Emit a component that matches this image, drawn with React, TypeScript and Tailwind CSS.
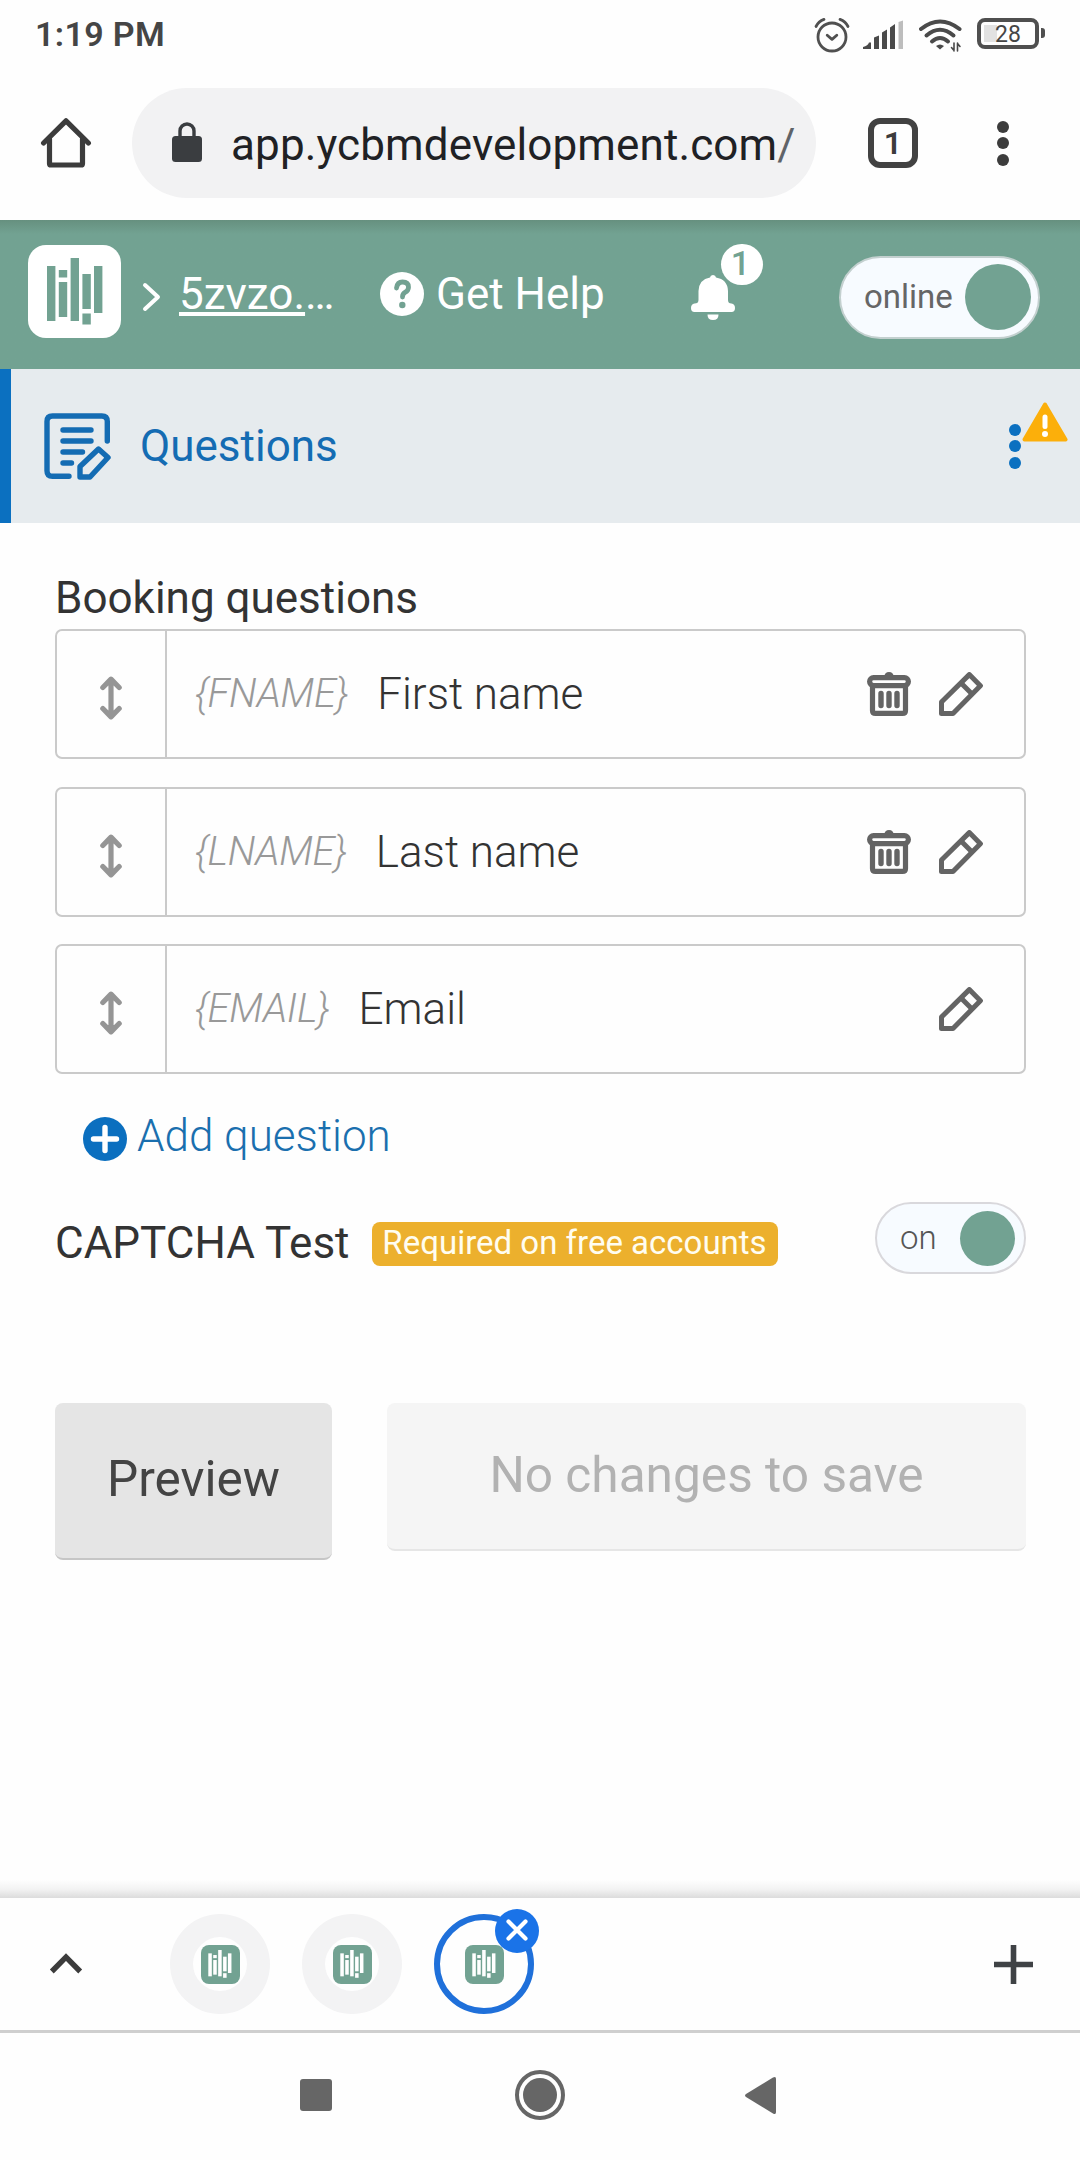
import { useState } from 'react';

type Question = {
  id: string;
  token: string;
  label: string;
  removable: boolean;
};

const QUESTIONS: Question[] = [
  { id: 'fname', token: '{FNAME}', label: 'First name', removable: true },
  { id: 'lname', token: '{LNAME}', label: 'Last name', removable: true },
  { id: 'email', token: '{EMAIL}', label: 'Email', removable: false },
];

function LogoBars({ className }: { className: string }) {
  return (
    <svg className={className} viewBox="0 0 56 67" fill="currentColor">
      <rect x="0" y="8" width="8.4" height="55" />
      <rect x="11.8" y="12" width="8.4" height="7.5" />
      <rect x="11.8" y="24" width="8.4" height="35" />
      <rect x="23.6" y="0" width="8.4" height="63" />
      <rect x="35.4" y="16" width="8.4" height="35" />
      <rect x="35.4" y="55.5" width="8.4" height="11" />
      <rect x="47" y="8" width="8.4" height="47" />
    </svg>
  );
}

function StatusBar() {
  return (
    <div className="flex h-[68px] shrink-0 items-center justify-between pl-[35px] pr-[35px] text-[#454545]">
      <span className="text-[34px] leading-none font-semibold tracking-[0.35px]">1:19 PM</span>
      <div className="flex items-start pt-[1px]">
        <svg className="h-[36px] w-[36px]" viewBox="0 0 36 36" fill="none" stroke="#505050" strokeLinecap="round" strokeLinejoin="round">
          <circle cx="18" cy="20" r="14" strokeWidth="2.8" />
          <path d="M13.2 18.2l4.8 4.2 4.8-4.2" strokeWidth="2.8" />
          <path d="M2 9.5Q4.5 4.5 10 2.4M34 9.5Q31.5 4.5 26 2.4" strokeWidth="2.8" />
        </svg>
        <svg className="mt-[3px] ml-[13px] h-[30px] w-[41px]" viewBox="0 0 41 30" fill="#4a4a4a">
          <path d="M0 29v-2q5-1.500 6-4.500h2V29zM11 29V17.500l5-2V29zM19 29V12.500l5-3V29zM27 29V7.500l5-3.500V29z" />
          <path d="M35.500 29V2L40 .5V29z" fill="#bdbdbd" />
        </svg>
        <svg className="mt-[2px] ml-[15px] h-[34px] w-[43px]" viewBox="0 0 43 34" fill="none" stroke="#4a4a4a" strokeLinecap="round">
          <path d="M2 10Q21 -5 40.500 10" strokeWidth="4" />
          <path d="M7.500 16.500Q21 5 34.500 16.500" strokeWidth="4" />
          <path d="M13 22.500Q21 15.500 29 22.500" strokeWidth="4" />
          <path d="M17 27Q21 24 25 27L21 30.500z" fill="#4a4a4a" stroke="none" />
          <path d="M35 24v8M35 31.500L32.500 28.500M38.500 32v-8M38.500 24.500L41 27.500" strokeWidth="1.600" />
        </svg>
        <div className="relative mt-[1px] ml-[15px] flex h-[31px] w-[62px] items-center justify-center rounded-[8px] border-4 border-[#4f4f4f] pt-[2px]">
          <div className="absolute top-[3px] left-[3px] h-[17px] w-[13px] bg-[#e2e2e2]" />
          <span className="relative text-[23px] leading-none">28</span>
        </div>
        <div className="mt-[11px] ml-[2px] h-[10px] w-[4px] rounded-r-[3px] bg-[#4f4f4f]" />
      </div>
    </div>
  );
}

function BrowserBar() {
  return (
    <div className="flex h-[152px] shrink-0 items-center pb-[2px] pl-[40px]">
      <svg className="h-[52px] w-[52px]" viewBox="0 0 52 52" fill="none" stroke="#3c3c3c" strokeWidth="5.200" strokeLinecap="round" strokeLinejoin="round">
        <path d="M3.600 26L26 3.800 48.400 26" />
        <path d="M9.500 22v24.400q0 1.600 1.600 1.600h29.800q1.600 0 1.600-1.600V22" />
      </svg>
      <div className="ml-[40px] flex h-[110px] w-[684px] items-center rounded-full bg-[#f2f2f3] pl-[40px]">
        <svg className="-mt-[3px] h-[40px] w-[30px] shrink-0" viewBox="0 0 30 40">
          <rect x="0" y="14" width="30" height="26" rx="3.500" fill="#3a3d40" />
          <path d="M8 15V9a7 7 0 0 1 14 0v6" fill="none" stroke="#3a3d40" strokeWidth="3.400" />
        </svg>
        <span className="ml-[29px] pt-[4px] text-[44px] leading-none tracking-[0.12px] whitespace-nowrap text-[#202124]">
          app.ycbmdevelopment.com<span className="text-[#5f6368]">/</span>
        </span>
      </div>
      <div className="ml-[52px] flex h-[50px] w-[50px] items-center justify-center rounded-[12px] border-[6px] border-[#424242] text-[#3c3c3c]">
        <span className="text-[32px] leading-none font-semibold">1</span>
      </div>
      <div className="ml-[79px] flex flex-col gap-[4.5px]">
        <div className="h-[12px] w-[12px] rounded-full bg-[#3c3c3c]" />
        <div className="h-[12px] w-[12px] rounded-full bg-[#3c3c3c]" />
        <div className="h-[12px] w-[12px] rounded-full bg-[#3c3c3c]" />
      </div>
    </div>
  );
}

function AppHeader() {
  return (
    <header className="flex h-[149px] shrink-0 items-start bg-[#72a292] bg-linear-to-b from-[#66907f] to-[#72a292] to-[14px] pl-[28px] text-white">
      <div className="mt-[25px] flex h-[93px] w-[93px] items-start justify-center rounded-[18px] bg-white pt-[13px]">
        <LogoBars className="h-[67px] w-[56px] text-[#72a292]" />
      </div>
      <svg className="mt-[62px] ml-[21px] h-[30px] w-[19px]" viewBox="0 0 19 30" fill="none" stroke="currentColor" strokeWidth="4" strokeLinecap="round" strokeLinejoin="round">
        <path d="M3 3l13 12L3 27" />
      </svg>
      <div className="mt-[52px] ml-[18px] w-[156px] text-[44px] leading-none whitespace-nowrap">
        <span className="underline decoration-4 underline-offset-[3px] [text-decoration-skip-ink:none]">5zvzo.</span>…
      </div>
      <svg className="mt-[52px] ml-[45px] h-[44px] w-[44px]" viewBox="0 0 44 44">
        <circle cx="22" cy="22" r="22" fill="#fff" />
        <path d="M16.500 16q.8-6 6-6 6 0 6 5.200 0 3.300-3.500 5.200-2.500 1.500-2.500 4.600" fill="none" stroke="#72a292" strokeWidth="4.800" strokeLinecap="round" />
        <circle cx="22.300" cy="33" r="3.200" fill="#72a292" />
      </svg>
      <span className="mt-[52px] ml-[12px] w-[170px] text-[44px] leading-none whitespace-nowrap">Get Help</span>
      <div className="relative mt-[55px] ml-[85px]">
        <svg className="h-[45px] w-[44px]" viewBox="0 0 44 45" fill="currentColor">
          <path d="M22 0a3 3 0 0 1 3 2.600Q36.500 4.500 37 16v9q0 3.500 3.500 3.500Q44 29 44 33t-3.500 4h-37Q0 37 0 33t3.500-4.500Q7.500 28.500 7.500 25v-9Q8 4.500 19 2.600A3 3 0 0 1 22 0z" />
          <path d="M16.500 39.500h11q0 5.500-5.500 5.500t-5.500-5.500z" />
        </svg>
        <span className="absolute -top-[31px] left-[30px] flex h-[41px] w-[42px] items-center justify-center rounded-full bg-white pr-[3px] pb-[3px] text-[34px] leading-none font-medium text-[#72a292]">
          1
        </span>
      </div>
      <div className="mt-[36px] ml-[104px] flex h-[83px] w-[201px] items-center rounded-full border-2 border-[#c3d0cf] bg-[#f7fbff] pl-[23px]">
        <span className="w-[101px] pb-[2px] text-[33px] leading-none text-[#666]">online</span>
        <div className="mb-[1px] h-[66px] w-[66px] rounded-full bg-[#72a292]" />
      </div>
    </header>
  );
}

function SectionBar() {
  return (
    <div className="flex h-[154px] shrink-0 items-center border-l-[11px] border-[#0b70c0] bg-[#e6ebee] pl-[33px]">
      <svg className="h-[67px] w-[67px]" viewBox="0 0 67 67" fill="none" stroke="#146cb3" strokeWidth="5.400" strokeLinecap="round" strokeLinejoin="round">
        <path d="M63.300 28V8.500q0-5.500-5.500-5.500H8.500Q3 3 3 8.500v49.200Q3 63.300 8.500 63.300H25" />
        <path d="M19 17h28M19 28h28M19 39h19.500M19 50h8.500" />
        <path d="M36 64V53.500L54.500 36l9.500 8.500L46 64z" />
      </svg>
      <span className="ml-[29px] text-[44px] leading-none text-[#146cb3]">Questions</span>
      <div className="relative mr-[59px] ml-auto flex flex-col gap-[4.5px]">
        <div className="h-[12px] w-[12px] rounded-full bg-[#0b70c0]" />
        <div className="h-[12px] w-[12px] rounded-full bg-[#0b70c0]" />
        <div className="h-[12px] w-[12px] rounded-full bg-[#0b70c0]" />
        <svg className="absolute -top-[22px] left-[13px] h-[40px] w-[46px]" viewBox="0 0 46 40">
          <path d="M23 2.500L43.500 37.500H2.500z" fill="#fcaf0a" stroke="#fcaf0a" strokeWidth="4" strokeLinejoin="round" />
          <path d="M23 15v9.500" stroke="#fff" strokeWidth="5" strokeLinecap="round" />
          <circle cx="23" cy="32" r="3" fill="#fff" />
        </svg>
      </div>
    </div>
  );
}

function TrashIcon() {
  return (
    <svg className="h-[44px] w-[44px]" viewBox="0 0 44 44" fill="none" stroke="#646464" strokeLinecap="round" strokeLinejoin="round">
      <path d="M17.500 4.500q0-4.500 4.500-4.500t4.500 4.500z" fill="#646464" stroke="none" />
      <rect x="2.600" y="5.600" width="38.800" height="8" rx="4" strokeWidth="5.200" />
      <path d="M5.500 14v24.400q0 3 3 3h27q3 0 3-3V14" strokeWidth="5.200" />
      <path d="M14 21.500v12M22 21.500v12M30 21.500v12" strokeWidth="5.400" />
    </svg>
  );
}

function PencilIcon() {
  return (
    <svg className="h-[44px] w-[44px]" viewBox="0 0 44 44" fill="none" stroke="#646464" strokeWidth="5" strokeLinejoin="round">
      <path d="M2.500 41.500V30L30.300 2.600 41.400 13.700 14 41.500z" />
      <path d="M22.500 11.500L32 21" />
    </svg>
  );
}

function QuestionRow({ question }: { question: Question }) {
  return (
    <li className="flex h-[130px] rounded-[7px] border-2 border-[#cacaca]">
      <div className="flex w-[110px] items-center justify-center border-r-2 border-[#cacaca] pt-[8px]">
        <svg className="h-[44px] w-[22px]" viewBox="0 0 22 44" fill="none" stroke="#959595" strokeWidth="5.200" strokeLinecap="round" strokeLinejoin="round">
          <path d="M11 4v36M2.800 11.500L11 3.200l8.200 8.300M2.800 32.500L11 40.800l8.200-8.300" />
        </svg>
      </div>
      <div className="flex flex-1 items-center pr-[41px] pl-[28px]">
        <span className="text-[40px] leading-none font-light tracking-[-0.3px] text-[#999] italic">{question.token}</span>
        <span className="ml-[29px] text-[44px] leading-none font-light text-[#333]">{question.label}</span>
        <div className="ml-auto flex gap-[28px]">
          {question.removable && (
            <button type="button" aria-label="Delete">
              <TrashIcon />
            </button>
          )}
          <button type="button" aria-label="Edit">
            <PencilIcon />
          </button>
        </div>
      </div>
    </li>
  );
}

function TabStrip() {
  const [active] = useState(2);

  return (
    <div className="flex h-[135px] shrink-0 items-center border-b-[3px] border-[#cfcfcf] bg-[#fefefe] pl-[49px]">
      <svg className="-mt-[2px] h-[22px] w-[34px]" viewBox="0 0 34 22" fill="none" stroke="#3c3c3c" strokeWidth="5.400">
        <path d="M2.800 19.500L17 5l14.200 14.500" />
      </svg>
      <div className="ml-[87px] flex gap-[32px]">
        {[0, 1, 2].map((tab) => (
          <div
            key={tab}
            className={
              tab === active
                ? 'relative flex h-[100px] w-[100px] items-center justify-center rounded-full border-[6px] border-[#1f70da]'
                : 'flex h-[100px] w-[100px] items-center justify-center rounded-full bg-[#f3f3f4]'
            }
          >
            <div className="flex h-[54px] w-[54px] items-center justify-center rounded-full bg-[#fefefe]">
              <div className="flex h-[39px] w-[39px] items-center justify-center rounded-[8px] bg-[#72a292]">
                <LogoBars className="h-[28px] w-[24px] text-white" />
              </div>
            </div>
            {tab === active && (
              <div className="absolute -top-[11px] -right-[11px] flex h-[44px] w-[44px] items-center justify-center rounded-full bg-[#1a73e8]">
                <svg className="-mt-[2px] h-[22px] w-[22px]" viewBox="0 0 22 22" stroke="#fff" strokeWidth="4.200" strokeLinecap="round">
                  <path d="M2.500 2.500l17 17M19.500 2.500l-17 17" />
                </svg>
              </div>
            )}
          </div>
        ))}
      </div>
      <svg className="mr-[47px] ml-auto h-[39px] w-[39px]" viewBox="0 0 39 39" stroke="#3f4245" strokeWidth="5.600">
        <path d="M19.500 0v39M0 19.500h39" />
      </svg>
    </div>
  );
}

export default function App() {
  return (
    <div className="flex h-[2160px] w-[1080px] flex-col overflow-hidden bg-[#fefefe] font-['Roboto',sans-serif]">
      <StatusBar />
      <BrowserBar />
      <AppHeader />
      <SectionBar />

      <main className="flex flex-1 flex-col pt-[53px] pr-[54px] pl-[55px]">
        <h2 className="text-[44px] leading-none text-[#333]">Booking questions</h2>
        <ul className="mt-[9px] flex flex-col gap-[27.5px]">
          {QUESTIONS.map((question) => (
            <QuestionRow key={question.id} question={question} />
          ))}
        </ul>

        <button type="button" className="mt-[43px] ml-[28px] flex h-[44px] items-center text-[#1a6fae]">
          <svg className="h-[44px] w-[44px]" viewBox="0 0 44 44">
            <circle cx="22" cy="22" r="22" fill="#0b6fbf" />
            <path d="M22 10.500v23M10.500 22h23" stroke="#fff" strokeWidth="5.400" strokeLinecap="round" />
          </svg>
          <span className="ml-[10px] pb-[6px] text-[44px] leading-none font-light">Add question</span>
        </button>

        <div className="mt-[41px] flex h-[72px] items-center">
          <span className="pt-[10px] text-[44px] leading-none text-[#333]">CAPTCHA Test</span>
          <span className="mt-[12px] ml-[22px] flex h-[44px] w-[406px] items-center justify-center rounded-[8px] bg-[#ecb02d] pb-[4px] text-[33px] leading-none whitespace-nowrap text-[#fffdf0]">
            Required on free accounts
          </span>
          <div className="ml-auto flex h-[72px] w-[151px] items-center rounded-full border-2 border-[#d9d8dc] bg-[#f7fbff] pl-[23px]">
            <span className="w-[60px] pb-[1px] text-[33px] leading-none font-light text-[#555]">on</span>
            <div className="h-[55px] w-[55px] rounded-full bg-[#72a292]" />
          </div>
        </div>

        <div className="mt-[129px] flex items-start">
          <button type="button" className="flex h-[157px] w-[277px] items-center justify-center rounded-[8px] border-b-2 border-[#c6c6c6] bg-[#e5e5e5] pb-[2px] text-[49.5px] leading-none text-[#444]">
            Preview
          </button>
          <button type="button" className="ml-[55px] flex h-[148px] flex-1 items-center justify-center rounded-[8px] border-b-2 border-[#e6e6e6] bg-[#f5f5f5] text-[49.6px] leading-none text-[#b2b2b2]">
            No changes to save
          </button>
        </div>
      </main>

      <div className="h-[18px] shrink-0 bg-linear-to-b from-[#fefefe] via-[#f3f3f3] to-[#dcdcdc]" />
      <TabStrip />

      {/* Android navigation keys */}
      <nav className="flex h-[127px] shrink-0 items-center pb-[3px] pl-[300px]">
        <div className="h-[32px] w-[32px] rounded-[3px] bg-[#666]" />
        <div className="ml-[183px] flex h-[50px] w-[50px] items-center justify-center rounded-full border-4 border-[#666]">
          <div className="h-[34px] w-[34px] rounded-full bg-[#666]" />
        </div>
        <svg className="ml-[180px] h-[37px] w-[31px]" viewBox="0 0 31 37" fill="#666">
          <path d="M1 17L28 .6q3-1.600 3 1.400v33q0 3-3 1.400L1 20q-2-1.500 0-3z" />
        </svg>
      </nav>
    </div>
  );
}
